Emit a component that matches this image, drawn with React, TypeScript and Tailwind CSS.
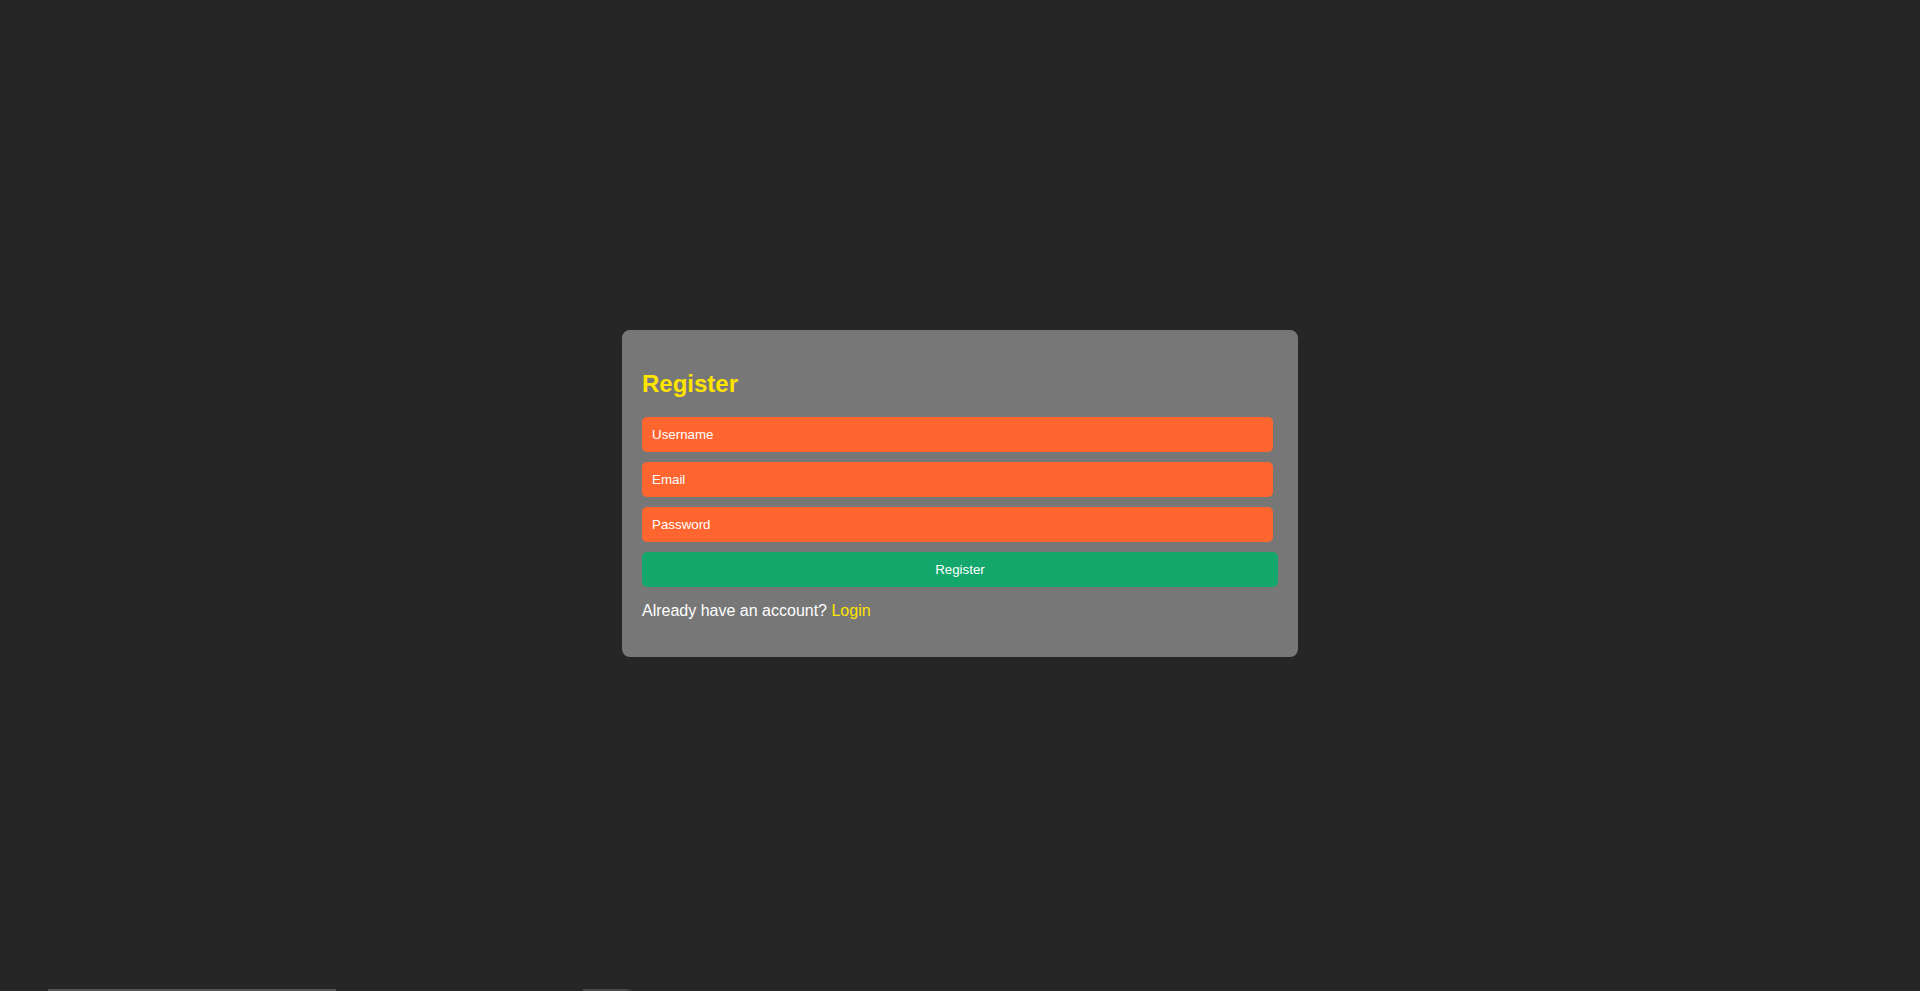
import React from "react";

export default function App() {
  return (
    <div
      className="w-full h-[991px] bg-[#262626] flex flex-col overflow-hidden"
      style={{ fontFamily: '"Liberation Sans", Arial, sans-serif' }}
    >
      <div className="flex-1 flex items-center justify-center pb-[2px]">
        <div className="w-[676px] h-[327px] bg-[#777777] rounded-lg px-5 pt-[40px]">
          <h2 className="text-[24px] leading-[28px] font-bold text-[#FFE400]">Register</h2>
          <form className="mt-[19px] flex flex-col gap-[10px]" onSubmit={(e) => e.preventDefault()}>
            <input
              type="text"
              placeholder="Username"
              className="w-[631px] h-[35px] rounded-[5px] bg-[#FF652F] px-[10px] text-[13.33px] text-white placeholder:text-white outline-none"
            />
            <input
              type="email"
              placeholder="Email"
              className="w-[631px] h-[35px] rounded-[5px] bg-[#FF652F] px-[10px] text-[13.33px] text-white placeholder:text-white outline-none"
            />
            <input
              type="password"
              placeholder="Password"
              className="w-[631px] h-[35px] rounded-[5px] bg-[#FF652F] px-[10px] text-[13.33px] text-white placeholder:text-white outline-none"
            />
            <button
              type="submit"
              className="w-[636px] h-[35px] rounded-[5px] bg-[#14A76C] text-[13.33px] text-white"
            >
              Register
            </button>
          </form>
          <p className="mt-[15px] text-[16px] leading-[18px] text-white">
            Already have an account? <a className="text-[#FFE400]">Login</a>
          </p>
        </div>
      </div>
      <div className="h-[2px] flex">
        <div className="ml-[48px] w-[288px] bg-[#555555]" />
        <div className="ml-[247px] w-[44px] bg-[#4a4a4a]" />
        <div className="w-[4px] bg-[#3a3a3a]" />
      </div>
    </div>
  );
}
